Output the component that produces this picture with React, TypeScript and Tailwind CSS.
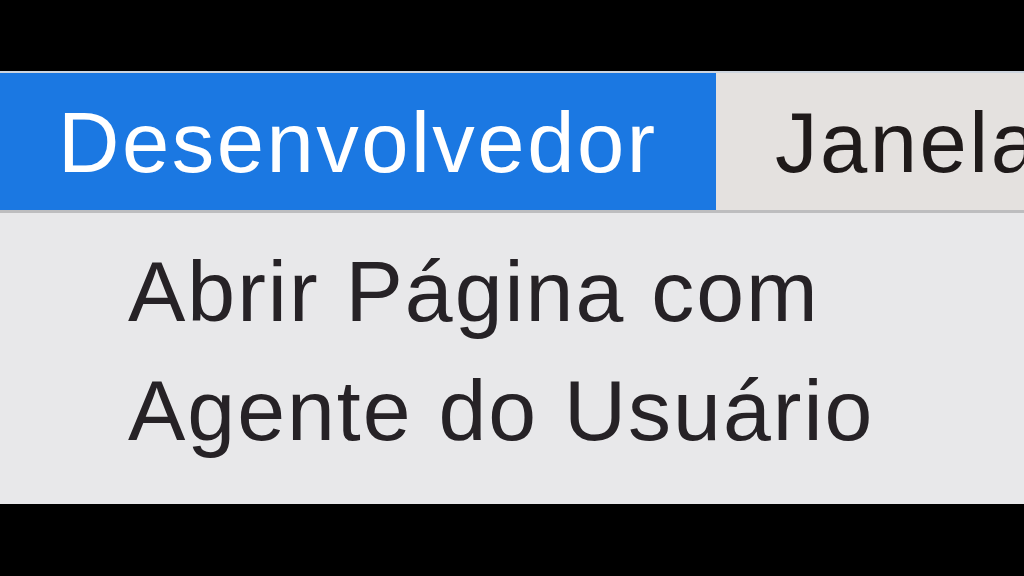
export default function App() {
  const font = { fontFamily: '"Liberation Sans", Arial, sans-serif' };

  return (
    <div className="flex h-[576px] w-[1024px] flex-col overflow-hidden bg-black" style={font}>
      <div className="h-[71px] shrink-0" />
      <div className="h-[2px] shrink-0 bg-[#cdd5df]" />

      {/* menu bar */}
      <div className="flex h-[137px] shrink-0 bg-[#e4e1df] text-[85px] leading-none tracking-[2.5px]">
        <div className="flex w-[716px] shrink-0 items-center bg-[#1b78e2] pl-[58px] pt-[2px] text-white">
          Desenvolvedor
        </div>
        <div className="flex items-center whitespace-nowrap pl-[59px] pt-[2px] text-[#1f1a1a]">Janela</div>
      </div>
      <div className="h-[3px] shrink-0 bg-[#bdbdbf]" />

      {/* dropdown */}
      <div className="h-[291px] shrink-0 bg-[#e8e8ea] pl-[128px] pt-[19px] text-[86px] leading-[119px] tracking-[2px] text-[#262226]">
        <p>Abrir Página com</p>
        <p>Agente do Usuário</p>
      </div>
    </div>
  );
}
